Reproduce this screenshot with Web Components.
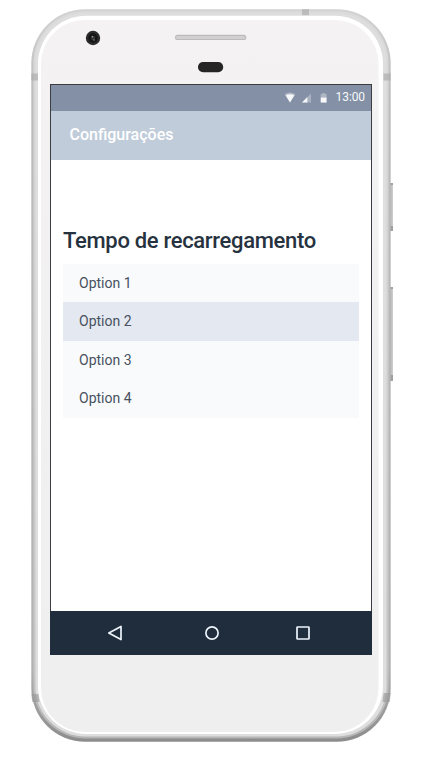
<!DOCTYPE html>
<html lang="pt">
<head>
<meta charset="utf-8">
<title>Configurações</title>
<style>
html,body{margin:0;background:#fff}
body{width:430px;height:758px;overflow:hidden;font-family:Roboto,"Liberation Sans",sans-serif}
</style>
</head>
<body>
<phone-frame>
  <status-bar time="13:00"></status-bar>
  <app-bar>Configurações</app-bar>
  <option-group>
    <span slot="title">Tempo de recarregamento</span>
    <option-row>Option 1</option-row>
    <option-row selected>Option 2</option-row>
    <option-row>Option 3</option-row>
    <option-row>Option 4</option-row>
  </option-group>
  <nav-bar></nav-bar>
</phone-frame>
<script>
function define(name, markup) {
  customElements.define(name, class extends HTMLElement {
    constructor() {
      super();
      this.attachShadow({mode: 'open'}).innerHTML = markup;
    }
    connectedCallback() {
      const t = this.shadowRoot.querySelector('.time');
      if (t) t.textContent = this.getAttribute('time');
    }
  });
}

define('phone-frame', `
<style>
:host{display:block;box-sizing:border-box;position:relative;width:430px;height:758px;padding:84px 58px 0 50px}
.body{position:absolute;inset:0;display:block}
.screen{position:relative;display:flex;flex-direction:column;box-sizing:border-box;width:322px;height:571px;border:1px solid #3b3d42;background:#fff}
</style>
<svg class="body" width="430" height="758" viewBox="0 0 430 758">
  <defs>
    <linearGradient id="rim" x2="0" y2="1"><stop offset="0" stop-color="#d2d2d2"/><stop offset=".12" stop-color="#bdbdbd"/><stop offset=".9" stop-color="#b2b2b2"/><stop offset="1" stop-color="#8c8c8c"/></linearGradient>
    <linearGradient id="mid" x2="0" y2="1"><stop offset="0" stop-color="#dadada"/><stop offset=".9" stop-color="#c6c6c6"/><stop offset="1" stop-color="#b5b5b5"/></linearGradient>
    <linearGradient id="face" x2="0" y2="1"><stop offset="0" stop-color="#f4f2f3"/><stop offset="1" stop-color="#efefef"/></linearGradient>
    <linearGradient id="key"><stop offset="0" stop-color="#a8a8a8"/><stop offset="1" stop-color="#d0d0d0"/></linearGradient>
  </defs>
  <g>
    <rect x="389" y="183" width="4" height="48" rx="1" fill="url(#key)"/>
    <path d="M390 183h3v2h-3zM390 226h3v5h-3z" fill="#a0a0a0"/>
    <rect x="389" y="287" width="4" height="94" rx="1" fill="url(#key)"/>
    <path d="M390 287h3v2h-3zM390 375h3v6h-3z" fill="#a0a0a0"/>
  </g>
  <rect x="31.3" y="9.2" width="359.4" height="732.6" rx="54" fill="url(#rim)"/>
  <rect x="33.5" y="11" width="355" height="727.5" rx="52" fill="url(#mid)"/>
  <rect x="35.5" y="13" width="351" height="723.5" rx="50" fill="#dedede"/>
  <path d="M302 9.2h7v6h-7zM31.3 73.5h6.7v7h-6.7zM383.5 73.5h7.2v7h-7.2z" fill="#aaa" opacity=".65"/>
  <path d="M31.3 694h7l1.2 8h-7.2zM390.7 693h-7l-1.2 9h7.3z" fill="#999" opacity=".65"/>
  <rect x="38" y="15.8" width="345" height="718.2" rx="48" fill="#fff"/>
  <rect x="41" y="20" width="337.5" height="712" rx="44" fill="url(#face)"/>
  <circle cx="93" cy="38" r="7.2" fill="#2b2b2b"/>
  <circle cx="93" cy="38" r="4.7" fill="#151515"/>
  <circle cx="93" cy="38" r="2.2" fill="#343434"/>
  <circle cx="92.5" cy="36.7" r=".8" fill="#aaa"/><circle cx="94" cy="40" r=".8" fill="#888"/>
  <rect x="175" y="34.8" width="71.3" height="5.2" rx="2.6" fill="#bcbabb"/>
  <rect x="176" y="36" width="69.3" height="3.1" rx="1.5" fill="#d2d0d1"/>
  <rect x="198" y="62" width="25.2" height="10.2" rx="5" fill="#252525"/>
</svg>
<div class="screen"><slot></slot></div>`);

define('status-bar', `
<style>
:host{display:flex;flex:none;height:25.5px;box-sizing:border-box;padding-right:6px;background:#8390a5;align-items:center;justify-content:flex-end;color:#fff;font-size:12px}
svg{display:block;margin-right:8px}
.time{line-height:25px;color:#f6f8fb;letter-spacing:-.1px}
</style>
<svg width="44" height="12" viewBox="0 0 44 12">
  <path d="M.5 2.2Q6-1 11.5 2.2L6 10.4Z" fill="#fff" opacity=".35"/>
  <path d="M1.7 3.2Q6 1.2 10.3 3.2L6 10.4Z" fill="#fff" opacity=".9"/>
  <path d="M18 10.4L27 1.4V10.4Z" fill="#fff" opacity=".3"/>
  <path d="M18 10.4L23.3 5.1V10.4Z" fill="#fff" opacity=".9"/>
  <path d="M36.7 2h1.7V1h2.5v1h1.7V6h-5.9z" fill="#fff" opacity=".35"/>
  <path d="M36.7 5.6h5.9v5h-5.9z" fill="#fff" opacity=".95"/>
</svg>
<span class="time"></span>`);

define('app-bar', `
<style>
:host{display:flex;flex:none;box-sizing:border-box;height:49.5px;padding:0 0 2px 18.5px;background:#c0ccda;align-items:center;color:#fff;font-size:16px;font-weight:500}
</style><span><slot></slot></span>`);

define('option-group', `
<style>
:host{display:block;flex:1;padding:67px 12px 0}
h1{margin:0;height:37px;line-height:28px;font-size:22px;letter-spacing:-.32px;font-weight:500;color:#273240;white-space:nowrap}
</style>
<h1><slot name="title"></slot></h1>
<div><slot></slot></div>`);

define('option-row', `
<style>
:host{display:flex;box-sizing:border-box;height:38.4px;padding:0 0 .6px 16px;align-items:center;background:#f9fafc;color:#475160;font-size:14px}
:host([selected]){background:#e4e8f1}
</style><span><slot></slot></span>`);

define('nav-bar', `
<style>
:host{display:flex;flex:none;height:44px;margin:0 -1px -1px;background:#1f2d3d;align-items:center;padding:0 0 0 57px;box-sizing:border-box}
svg{display:block;flex:none;fill:none;stroke:#edf4fc;stroke-width:1.7;stroke-linejoin:round}
svg+svg{margin-left:80.5px}
svg:last-child{margin-left:75.5px}
</style>
<svg width="16" height="16" viewBox="0 0 16 16"><path d="M1.8 8L14 1.4V14.6Z"/></svg>
<svg width="16" height="16" viewBox="0 0 16 16"><circle cx="8" cy="8" r="6.1"/></svg>
<svg width="16" height="16" viewBox="0 0 16 16"><rect x="2" y="2" width="12" height="12" rx=".6"/></svg>`);
</script>
</body>
</html>
